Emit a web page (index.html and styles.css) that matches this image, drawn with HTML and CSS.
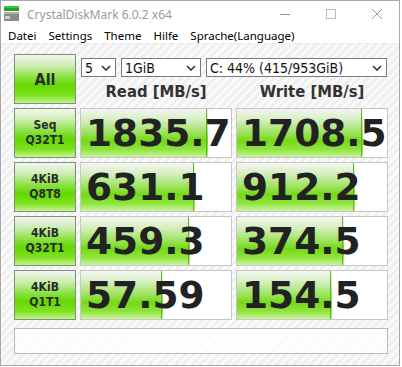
FILE: index.html
```html
<!DOCTYPE html>
<html lang="de">
<head>
  <meta charset="UTF-8" />
  <title>CrystalDiskMark 6.0.2 x64</title>
  <link rel="stylesheet" href="styles.css">
</head>
<body>
  <div class="window">
    <div class="titlebar">
      <svg class="app-icon" width="16" height="16" viewBox="0 0 16 16">
        <rect x="0" y="0" width="15" height="2" fill="#3fbf3f"/>
        <rect x="0" y="2" width="15" height="3" fill="#22a022"/>
        <rect x="0" y="6" width="15" height="9" fill="#8a8a8a"/>
        <rect x="0" y="6" width="15" height="2" fill="#b0b0b0"/>
        <rect x="1" y="10" width="5" height="3" fill="#cfcfcf"/>
      </svg>
      <span class="title">CrystalDiskMark 6.0.2 x64</span>
      <div class="controls">
        <svg width="46" height="22" viewBox="0 0 46 22"><path d="M18 11.5h10" stroke="#999" stroke-width="1"/></svg>
        <svg width="46" height="22" viewBox="0 0 46 22"><rect x="18.5" y="6.5" width="9" height="9" stroke="#bbb" fill="none"/></svg>
        <svg width="46" height="22" viewBox="0 0 46 22"><path d="M18 6l10 10M28 6l-10 10" stroke="#999" stroke-width="1"/></svg>
      </div>
    </div>

    <div class="menubar">
      <span>Datei</span>
      <span>Settings</span>
      <span>Theme</span>
      <span>Hilfe</span>
      <span>Sprache(Language)</span>
    </div>

    <div class="main">
      <div class="btn btn-all">All</div>
      <div class="top">
        <div class="selects">
          <div class="select sel-count">5 <svg width="10" height="6" viewBox="0 0 10 6"><path d="M1 1l4 4 4-4" stroke="#333" stroke-width="1.6" fill="none"/></svg></div>
          <div class="select sel-size">1GiB <svg width="10" height="6" viewBox="0 0 10 6"><path d="M1 1l4 4 4-4" stroke="#333" stroke-width="1.6" fill="none"/></svg></div>
          <div class="select sel-drive">C: 44% (415/953GiB) <svg width="10" height="6" viewBox="0 0 10 6"><path d="M1 1l4 4 4-4" stroke="#333" stroke-width="1.6" fill="none"/></svg></div>
        </div>
        <div class="headers">
          <div>Read [MB/s]</div>
          <div>Write [MB/s]</div>
        </div>
      </div>

      <div class="btn">Seq<br>Q32T1</div>
      <div class="cell" style="--fill: 127px">1835.7</div>
      <div class="cell" style="--fill: 126px">1708.5</div>

      <div class="btn">4KiB<br>Q8T8</div>
      <div class="cell" style="--fill: 114px">631.1</div>
      <div class="cell" style="--fill: 118px">912.2</div>

      <div class="btn">4KiB<br>Q32T1</div>
      <div class="cell" style="--fill: 109px">459.3</div>
      <div class="cell" style="--fill: 107px">374.5</div>

      <div class="btn">4KiB<br>Q1T1</div>
      <div class="cell" style="--fill: 82px">57.59</div>
      <div class="cell" style="--fill: 95px">154.5</div>

      <div class="comment"></div>
    </div>
  </div>
</body>
</html>
```

FILE: styles.css
```css
:root {
  --border: #a8a8a8;
  --cell-border: #c6c6c6;
  --text: #222;
  --green-grad: linear-gradient(to bottom, #f4f6f2 0%, #d6efc2 22%, #9be35a 50%, #74d915 66%, #8fe43c 84%, #c9f4a0 100%);
  --btn-grad: linear-gradient(to bottom, #f3f5f1 0%, #cdeeb2 22%, #86e03a 48%, #63d800 64%, #7ee21f 84%, #c3f38e 100%);
}

* {
  box-sizing: border-box;
  margin: 0;
  padding: 0;
}

body {
  background: #fff;
  font-family: "DejaVu Sans Condensed", "DejaVu Sans", sans-serif;
  font-stretch: condensed;
  color: var(--text);
}

.window {
  width: 400px;
  height: 366px;
  border: 1px solid var(--border);
  background: #fff;
  display: flex;
  flex-direction: column;
}

.titlebar {
  height: 26px;
  display: flex;
  align-items: center;
  padding-left: 3px;
}

.app-icon {
  margin-top: -1px;
}

.title {
  margin-left: 7px;
  font-family: "Noto Sans", sans-serif;
  font-stretch: normal;
  font-size: 12px;
  color: #9a9a9a;
}

.controls {
  margin-left: auto;
  display: flex;
  margin-right: -1px;
}

.menubar {
  height: 17px;
  display: flex;
  gap: 12px;
  padding-left: 7px;
  font-family: "Noto Sans", sans-serif;
  font-stretch: normal;
  font-size: 11.5px;
  line-height: 17px;
  color: #000;
  border-bottom: 1px solid #ececec;
}

.main {
  flex: 1;
  display: grid;
  grid-template-columns: 62px 152px 152px;
  grid-template-rows: 50px repeat(4, 50px) 30px;
  gap: 4px;
  padding: 10px 0 0 13px;
  background-color: #f3f3f3;
  background-image: repeating-linear-gradient(135deg, #f0f0f0 0 3px, #fafafa 3px 6px);
}

.btn {
  border: 1px solid #7d907d;
  background: var(--btn-grad);
  display: flex;
  align-items: center;
  justify-content: center;
  text-align: center;
  font-weight: bold;
  font-size: 12px;
  line-height: 15px;
  color: #2a2a2a;
}

.btn-all {
  font-size: 16px;
}

.top {
  grid-column: 2 / 4;
  display: flex;
  flex-direction: column;
}

.selects {
  display: flex;
  gap: 5px;
  margin: 4px 1px 0;
  height: 19px;
}

.select {
  border: 1px solid #7a7a7a;
  background: #fff;
  display: flex;
  align-items: center;
  justify-content: space-between;
  padding: 0 4px 0 3px;
  font-size: 14px;
  color: #111;
}

.sel-count {
  width: 35px;
}

.sel-size {
  width: 80px;
}

.sel-drive {
  flex: 1;
}

.headers {
  flex: 1;
  display: grid;
  grid-template-columns: 152px 152px;
  gap: 4px;
  align-items: center;
  text-align: center;
  font-weight: bold;
  font-size: 16.5px;
  color: #333;
  padding-top: 1px;
}

.cell {
  border: 1px solid var(--cell-border);
  background:
    linear-gradient(#5fb52e, #5fb52e) no-repeat calc(var(--fill) - 2px) 0 / 1px 100%,
    var(--green-grad) no-repeat 0 0 / var(--fill) 100%,
    #fff;
  font-family: "DejaVu Sans", sans-serif;
  font-stretch: normal;
  font-weight: bold;
  font-size: 37.5px;
  line-height: 48px;
  padding-left: 5px;
  color: var(--text);
  white-space: nowrap;
}

.comment {
  grid-column: 1 / 4;
  margin-top: 4px;
  border: 1px solid #b8b8b8;
  background: rgba(255, 255, 255, 0.75);
}
```
